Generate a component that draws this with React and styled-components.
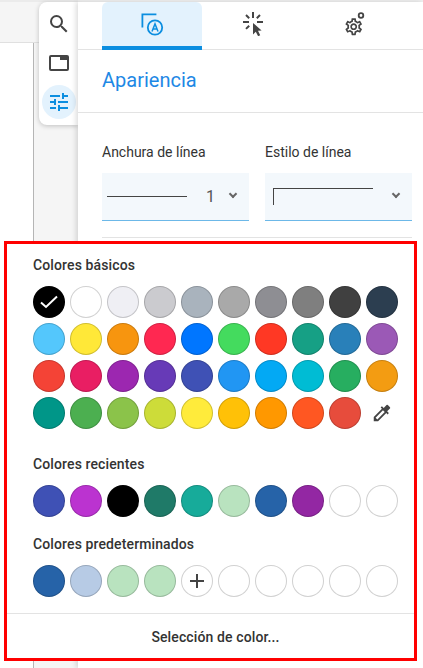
import React from "react";
import styled, { createGlobalStyle } from "styled-components";

const basicColors = [
  "#000000", "#ffffff", "#efeff4", "#cbcbcf", "#a9b3bd", "#a9a9a9", "#8e8e93", "#7f7f7f", "#404040", "#2c3e50",
  "#54c7fc", "#ffe838", "#f7950f", "#ff2851", "#0076ff", "#44db5e", "#ff3824", "#16a085", "#2980b9", "#9b59b6",
  "#f44336", "#e91e63", "#9c27b0", "#673ab7", "#3f51b5", "#2196f3", "#03a9f4", "#00bcd4", "#27ae60", "#f39c12",
  "#009688", "#4caf50", "#8bc34a", "#cddc39", "#ffeb3b", "#ffc107", "#ff9800", "#ff5722", "#e74c3c",
];
const recentColors = ["#3f51b5", "#bb33d0", "#000000", "#1f7a68", "#17ab9a", "#b9e3bf", "#2663a8", "#9327a3", "#ffffff", "#ffffff"];
const defaultColors = ["#2663a8", "#b7cbe5", "#b9e3bf", "#b9e3bf", "add", "#ffffff", "#ffffff", "#ffffff", "#ffffff", "#ffffff"];

const App = () => {
  return (
    <Page>
      <GlobalStyle />
      <DocColumn>
        <DocHeader />
        <DocBody>
          <DocSheet />
          <DocGutter />
        </DocBody>
        <SideToolbar>
          <ToolButton>
            <svg width="24" height="24" viewBox="0 0 24 24" fill="#444">
              <path d="M15.5 14h-.79l-.28-.27A6.47 6.47 0 0 0 16 9.5 6.5 6.5 0 1 0 9.5 16c1.61 0 3.09-.59 4.23-1.57l.27.28v.79l5 4.99L20.49 19l-4.99-5zm-6 0C7.01 14 5 11.99 5 9.5S7.01 5 9.5 5 14 7.01 14 9.5 11.99 14 9.5 14z" />
            </svg>
          </ToolButton>
          <ToolButton>
            <svg width="24" height="24" viewBox="0 0 24 24" fill="#444" fillRule="evenodd">
              <path d="M4 4h16a2 2 0 0 1 2 2v12a2 2 0 0 1-2 2H4a2 2 0 0 1-2-2V6a2 2 0 0 1 2-2zM4 6v12h16V9h-7V6z" />
            </svg>
          </ToolButton>
          <ToolButton $active>
            <svg width="24" height="24" viewBox="0 0 24 24" fill="#0b8ee0">
              <path d="M3 17v2h6v-2H3zM3 5v2h10V5H3zm10 16v-2h8v-2h-8v-2h-2v6h2zM7 9v2H3v2h4v2h2V9H7zm14 4v-2H11v2h10zm-6-4h2V7h4V5h-4V3h-2v6z" />
            </svg>
          </ToolButton>
        </SideToolbar>
      </DocColumn>
      <Panel>
        <Tabs>
          <Tab $active>
            <svg width="24" height="24" viewBox="0 0 24 24" fill="none" stroke="#0b8ee0" strokeWidth="1.8">
              <path d="M2.4 15.5V2.4h14" />
              <circle cx="15" cy="15.5" r="7.2" />
              <path d="M12 19.5l3-7.6 3 7.6M13 17h4" strokeWidth="1.5" />
            </svg>
          </Tab>
          <Tab>
            <svg width="24" height="24" viewBox="0 0 24 24" fill="#444">
              <path d="M11 0h2v6h-2zM2 9h6v2H2zM16 9h6v2h-6z" />
              <path d="M4.3 3.7l1.4-1.4 3.2 3.2-1.4 1.4zM15.1 5.5l3.2-3.2 1.4 1.4-3.2 3.2zM7.5 13l1.4 1.4-3.2 3.2-1.4-1.4z" />
              <path d="M12 11v11.5l2.8-2.7 2.3 4.4 2.1-1-2.2-4.4 3.6-.4z" />
            </svg>
          </Tab>
          <Tab>
            <svg width="24" height="24" viewBox="0 0 24 24" fill="#444">
              <path
                transform="translate(1.5 4.5) scale(.85)"
                d="M19.43 12.98c.04-.32.07-.64.07-.98 0-.34-.03-.66-.07-.98l2.11-1.65c.19-.15.24-.42.12-.64l-2-3.46c-.09-.16-.26-.25-.44-.25-.06 0-.12.01-.17.03l-2.49 1c-.52-.4-1.08-.73-1.69-.98l-.38-2.65C14.46 2.18 14.25 2 14 2h-4c-.25 0-.46.18-.49.42l-.38 2.65c-.61.25-1.17.59-1.69.98l-2.49-1c-.06-.02-.12-.03-.18-.03-.17 0-.34.09-.43.25l-2 3.46c-.13.22-.07.49.12.64l2.11 1.65c-.04.32-.07.65-.07.98 0 .33.03.66.07.98l-2.11 1.65c-.19.15-.24.42-.12.64l2 3.46c.09.16.26.25.44.25.06 0 .12-.01.17-.03l2.49-1c.52.4 1.08.73 1.69.98l.38 2.65c.03.24.24.42.49.42h4c.25 0 .46-.18.49-.42l.38-2.65c.61-.25 1.17-.59 1.69-.98l2.49 1c.06.02.12.03.18.03.17 0 .34-.09.43-.25l2-3.46c.12-.22.07-.49-.12-.64l-2.11-1.65zm-1.98-1.71c.04.31.05.52.05.73 0 .21-.02.43-.05.73l-.14 1.13.89.7 1.08.84-.7 1.21-1.27-.51-1.04-.42-.9.68c-.43.32-.84.56-1.25.73l-1.06.43-.16 1.13-.2 1.35h-1.4l-.19-1.35-.16-1.13-1.06-.43c-.43-.18-.83-.41-1.23-.71l-.91-.7-1.06.43-1.27.51-.7-1.21 1.08-.84.89-.7-.14-1.13c-.03-.31-.05-.54-.05-.74s.02-.43.05-.73l.14-1.13-.89-.7-1.08-.84.7-1.21 1.27.51 1.04.42.9-.68c.43-.32.84-.56 1.25-.73l1.06-.43.16-1.13.2-1.35h1.39l.19 1.35.16 1.13 1.06.43c.43.18.83.41 1.23.71l.91.7 1.06-.43 1.27-.51.7 1.21-1.07.85-.89.7.14 1.13zM12 8c-2.21 0-4 1.79-4 4s1.79 4 4 4 4-1.79 4-4-1.79-4-4-4zm0 6c-1.1 0-2-.9-2-2s.9-2 2-2 2 .9 2 2-.9 2-2 2z"
              />
              <circle cx="19" cy="3.5" r="2.3" fill="none" stroke="#444" strokeWidth="1.8" />
            </svg>
          </Tab>
        </Tabs>
        <Heading>Apariencia</Heading>
        <FieldsRow>
          <Field>
            <FieldLabel>Anchura de línea</FieldLabel>
            <SelectBox>
              <WidthLine />
              <SelectValue>1</SelectValue>
              <Chevron />
            </SelectBox>
          </Field>
          <Field>
            <FieldLabel>Estilo de línea</FieldLabel>
            <SelectBox>
              <CornerLine />
              <Chevron />
            </SelectBox>
          </Field>
        </FieldsRow>
        <FieldsRule />
      </Panel>
      <ColorPopup>
        <PopupBody>
          <SectionTitle>Colores básicos</SectionTitle>
          <SwatchGrid>
            {basicColors.map((color, i) => (
              <Swatch key={i} $color={color}>
                {i === 0 && (
                  <svg width="18" height="14" viewBox="0 0 18 14" fill="none" stroke="#fff" strokeWidth="2">
                    <path d="M1 7.5l5 4.5L17 1.5" />
                  </svg>
                )}
              </Swatch>
            ))}
            <PickerCell>
              <svg width="22" height="22" viewBox="0 0 24 24" fill="#444">
                <path d="M20.71 5.63l-2.34-2.34a.996.996 0 0 0-1.41 0l-3.12 3.12-1.93-1.91-1.41 1.41 1.42 1.42L3 16.25V21h4.75l8.92-8.92 1.42 1.42 1.41-1.41-1.92-1.92 3.12-3.12c.4-.4.4-1.03.01-1.42zM6.92 19L5 17.08l8.06-8.06 1.92 1.92L6.92 19z" />
              </svg>
            </PickerCell>
          </SwatchGrid>
          <SectionTitle $gap={26}>Colores recientes</SectionTitle>
          <SwatchGrid>
            {recentColors.map((color, i) => (
              <Swatch key={i} $color={color} />
            ))}
          </SwatchGrid>
          <SectionTitle $gap={18}>Colores predeterminados</SectionTitle>
          <SwatchGrid>
            {defaultColors.map((color, i) =>
              color === "add" ? (
                <Swatch key={i} $color="#ffffff">
                  <svg width="16" height="16" viewBox="0 0 16 16" fill="#444">
                    <path d="M7 1h2v6h6v2H9v6H7V9H1V7h6z" />
                  </svg>
                </Swatch>
              ) : (
                <Swatch key={i} $color={color} />
              )
            )}
          </SwatchGrid>
        </PopupBody>
        <PopupFooter>Selección de color...</PopupFooter>
      </ColorPopup>
    </Page>
  );
};

export default App;

const GlobalStyle = createGlobalStyle`
  html, body {
    margin: 0;
    padding: 0;
    background: #fff;
  }
  * {
    box-sizing: border-box;
  }
`;
const Page = styled.div`
  position: relative;
  display: flex;
  width: 423px;
  height: 668px;
  overflow: hidden;
  padding-top: 2px;
  background: #f0f0f0;
  font-family: Roboto, "Liberation Sans", sans-serif;
  color: #333;
`;
const DocColumn = styled.div`
  position: relative;
  display: flex;
  flex-direction: column;
  width: 78px;
  margin-top: -2px;
  flex-shrink: 0;
`;
const DocHeader = styled.div`
  height: 43px;
  background: #f5f5f5;
  border-top: 2px solid #ebebeb;
  border-bottom: 1px solid #e0e0e0;
`;
const DocBody = styled.div`
  display: flex;
  flex: 1;
`;
const DocSheet = styled.div`
  width: 34px;
  background: #fff;
  border-right: 1px solid #b5b5b5;
`;
const DocGutter = styled.div`
  flex: 1;
  background: #f5f5f5;
`;
const SideToolbar = styled.div`
  position: absolute;
  top: 2px;
  left: 39px;
  width: 39px;
  height: 123px;
  padding-top: 5px;
  display: flex;
  flex-direction: column;
  align-items: center;
  background: #fff;
  border-radius: 8px 0 0 8px;
  box-shadow: 0 1px 5px rgba(0, 0, 0, 0.22);
`;
const ToolButton = styled.div`
  width: 34px;
  height: 34px;
  margin-bottom: 5px;
  display: flex;
  align-items: center;
  justify-content: center;
  border-radius: 50%;
  background: ${(p) => (p.$active ? "#e3f2fd" : "transparent")};
`;
const Panel = styled.div`
  position: relative;
  flex: 1;
  background: #fff;
  box-shadow: -2px 0 5px rgba(0, 0, 0, 0.14);
`;
const Tabs = styled.div`
  display: flex;
  height: 48px;
  padding-left: 24px;
  border-bottom: 1px solid #e3e3e3;
`;
const Tab = styled.div`
  width: 100px;
  height: 48px;
  margin-right: 1px;
  display: flex;
  align-items: center;
  justify-content: center;
  border-radius: 6px 6px 0 0;
  background: ${(p) => (p.$active ? "#e3f2fd" : "transparent")};
  border-bottom: 4px solid ${(p) => (p.$active ? "#0b8ee0" : "transparent")};
`;
const Heading = styled.h2`
  margin: 0;
  height: 63px;
  padding: 17px 0 0 24px;
  font-size: 20px;
  line-height: 26px;
  font-weight: 400;
  color: #1e88e5;
  border-bottom: 1px solid #e3e3e3;
`;
const FieldsRow = styled.div`
  display: flex;
  gap: 16px;
  padding: 30px 11px 0 24px;
`;
const Field = styled.div`
  flex: 1;
`;
const FieldLabel = styled.div`
  height: 30px;
  font-size: 14px;
  line-height: 18px;
  font-weight: 400;
  color: #333;
`;
const SelectBox = styled.div`
  position: relative;
  height: 48px;
  display: flex;
  align-items: center;
  padding: 0 10px 0 5px;
  background: #f3f8fc;
  border-bottom: 1px solid #6cb8e8;
`;
const WidthLine = styled.div`
  width: 80px;
  height: 1px;
  background: #444;
`;
const CornerLine = styled.div`
  width: 100px;
  height: 17px;
  margin-left: 3px;
  border-top: 1px solid #444;
  border-left: 1px solid #444;
`;
const SelectValue = styled.span`
  margin-left: 19px;
  font-size: 16px;
  color: #555;
`;
const Chevron = styled.span`
  position: absolute;
  right: 13px;
  top: 18px;
  width: 6px;
  height: 6px;
  border-right: 2px solid #666;
  border-bottom: 2px solid #666;
  transform: rotate(45deg);
`;
const FieldsRule = styled.div`
  height: 1px;
  margin: 16px 11px 0 24px;
  background: #e3e3e3;
`;
const ColorPopup = styled.div`
  position: absolute;
  top: 241px;
  left: 4px;
  width: 413px;
  height: 420px;
  display: flex;
  flex-direction: column;
  background: #fff;
  border: 3px solid #f00;
`;
const PopupBody = styled.div`
  flex: 1;
  padding: 12px 0 0 26px;
`;
const SectionTitle = styled.div`
  margin-top: ${(p) => p.$gap || 0}px;
  height: 18px;
  font-size: 14px;
  line-height: 18px;
  font-weight: 500;
  letter-spacing: 0.12px;
  color: #333;
`;
const SwatchGrid = styled.div`
  display: grid;
  grid-template-columns: repeat(10, 32px);
  gap: 5px;
  margin-top: 12px;
`;
const Swatch = styled.div`
  width: 32px;
  height: 32px;
  display: flex;
  align-items: center;
  justify-content: center;
  border-radius: 50%;
  background: ${(p) => p.$color};
  border: 1px solid rgba(0, 0, 0, 0.18);
`;
const PickerCell = styled.div`
  width: 32px;
  height: 32px;
  display: flex;
  align-items: center;
  justify-content: center;
`;
const PopupFooter = styled.div`
  height: 45px;
  padding: 1px 0 0 10px;
  display: flex;
  align-items: center;
  justify-content: center;
  border-top: 1px solid #e3e3e3;
  font-size: 14px;
  font-weight: 500;
  letter-spacing: 0.12px;
  color: #333;
`;
